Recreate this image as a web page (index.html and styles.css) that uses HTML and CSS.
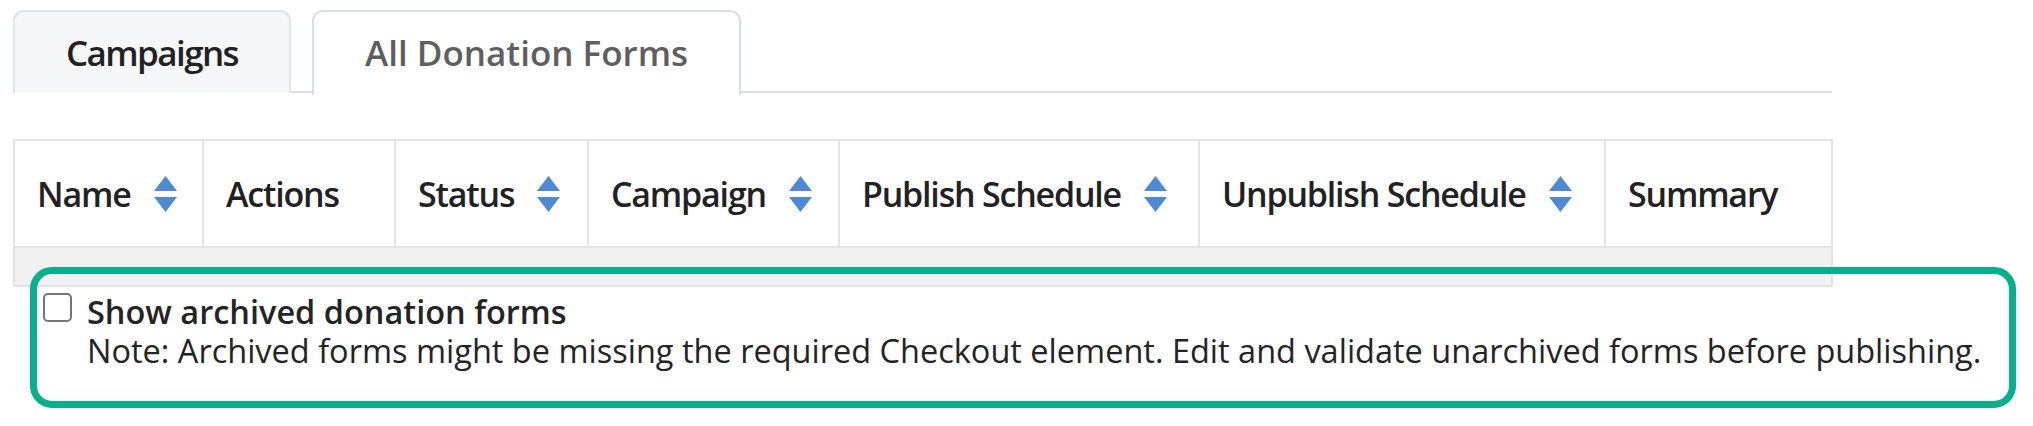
FILE: index.html
```html
<!DOCTYPE html>
<html lang="en">
<head>
<meta charset="utf-8">
<title>All Donation Forms</title>
<link rel="stylesheet" href="styles.css">
</head>
<body>
<div class="page">
  <div class="tabs">
    <div class="tab">Campaigns</div>
    <div class="tab tab-active">All Donation Forms</div>
  </div>

  <table class="forms-table">
    <colgroup>
      <col style="width:189px">
      <col style="width:192px">
      <col style="width:193px">
      <col style="width:251px">
      <col style="width:360px">
      <col style="width:406px">
      <col style="width:227px">
    </colgroup>
    <thead>
      <tr>
        <th><span class="th-inner">Name <svg class="sort" viewBox="0 0 23 36" aria-hidden="true"><path d="M11.5 0 L23 15 H0 Z"/><path d="M0 21 H23 L11.5 36 Z"/></svg></span></th>
        <th><span class="th-inner">Actions</span></th>
        <th><span class="th-inner">Status <svg class="sort" viewBox="0 0 23 36" aria-hidden="true"><path d="M11.5 0 L23 15 H0 Z"/><path d="M0 21 H23 L11.5 36 Z"/></svg></span></th>
        <th><span class="th-inner">Campaign <svg class="sort" viewBox="0 0 23 36" aria-hidden="true"><path d="M11.5 0 L23 15 H0 Z"/><path d="M0 21 H23 L11.5 36 Z"/></svg></span></th>
        <th><span class="th-inner">Publish Schedule <svg class="sort" viewBox="0 0 23 36" aria-hidden="true"><path d="M11.5 0 L23 15 H0 Z"/><path d="M0 21 H23 L11.5 36 Z"/></svg></span></th>
        <th><span class="th-inner">Unpublish Schedule <svg class="sort" viewBox="0 0 23 36" aria-hidden="true"><path d="M11.5 0 L23 15 H0 Z"/><path d="M0 21 H23 L11.5 36 Z"/></svg></span></th>
        <th><span class="th-inner">Summary</span></th>
      </tr>
    </thead>
    <tbody>
      <tr class="empty-row"><td colspan="7"></td></tr>
    </tbody>
  </table>

  <div class="archived">
    <span class="checkbox"></span>
    <div class="archived-text">
      <div class="archived-label">Show archived donation forms</div>
      <div class="archived-note">Note: Archived forms might be missing the required Checkout element. Edit and validate unarchived forms before publishing.</div>
    </div>
  </div>

  <div class="highlight"></div>
</div>
</body>
</html>
```

FILE: styles.css
```css
* { box-sizing: border-box; }

html, body {
  margin: 0;
  padding: 0;
  background: #ffffff;
}

body {
  font-family: "Open Sans", "Noto Sans", "Liberation Sans", sans-serif;
  color: #242424;
}

.page {
  position: relative;
  width: 2033px;
  height: 426px;
  padding: 10px 0 0 13px;
}

/* Tabs */
.tabs {
  display: flex;
  gap: 21px;
  width: 1819px;
  height: 83px;
  border-bottom: 2px solid #d9e0e5;
}

.tab {
  display: flex;
  align-items: center;
  justify-content: center;
  height: 83px;
  padding: 0 51px;
  border: 2px solid #dfe4e8;
  border-bottom: none;
  border-radius: 11px 11px 0 0;
  background: #f6f7f9;
  font-size: 35px;
  font-weight: 600;
  letter-spacing: -1.6px;
  color: #222222;
  white-space: nowrap;
}

.tab-active {
  background: #ffffff;
  color: #5f5f5f;
  letter-spacing: 0;
  margin-bottom: -2px;
  height: 85px;
  border-color: #d9e0e5;
  padding-bottom: 2px;
}

/* Table */
.forms-table {
  margin-top: 46px;
  width: 1819px;
  border-collapse: collapse;
  table-layout: fixed;
  border: 2px solid #e3e3e3;
}

.forms-table th {
  height: 107px;
  padding: 0 0 0 22px;
  text-align: left;
  vertical-align: middle;
  border: 2px solid #e3e3e3;
  font-size: 34px;
  font-weight: 600;
  letter-spacing: -1.2px;
  color: #222222;
  white-space: nowrap;
}

.th-inner {
  display: inline-flex;
  align-items: center;
  gap: 23px;
}

.sort {
  width: 23px;
  height: 36px;
  fill: #4d8ad3;
  flex: none;
}

.empty-row td {
  height: 39px;
  background: #f1f1f1;
  padding: 0;
  border: 2px solid #e3e3e3;
}

/* Archived option */
.archived {
  display: flex;
  align-items: flex-start;
  gap: 15px;
  margin: 5px 0 0 30px;
}

.checkbox {
  flex: none;
  width: 29px;
  height: 29px;
  margin-top: 1px;
  border: 2px solid #757575;
  border-radius: 5px;
  background: #ffffff;
}

.archived-text {
  font-size: 32.5px;
  line-height: 39px;
  color: #242424;
}

.archived-label {
  font-weight: 600;
}

.archived-note {
  font-weight: 400;
}

/* Highlight overlay */
.highlight {
  position: absolute;
  left: 30px;
  top: 267px;
  width: 1986px;
  height: 141px;
  border: 7px solid #08ae8e;
  border-radius: 22px;
  pointer-events: none;
}
```
